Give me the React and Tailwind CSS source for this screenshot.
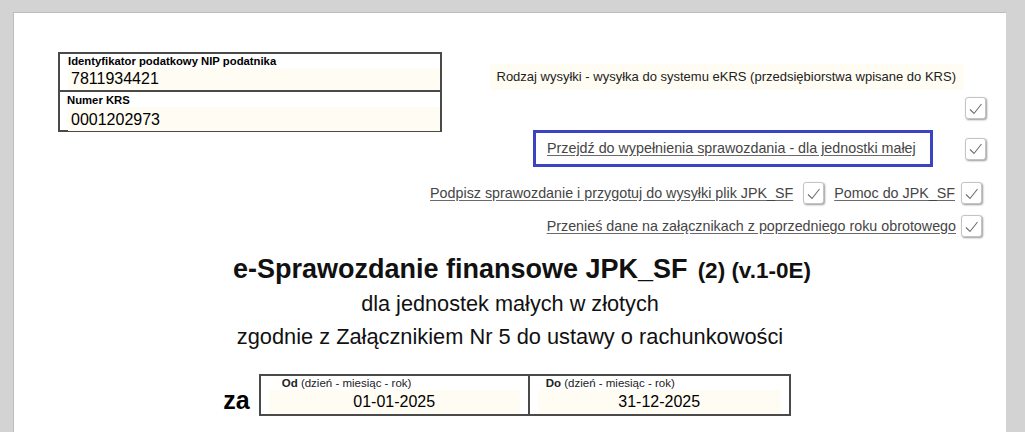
import React from "react";

function Check() {
  return (
    <div className="w-[21px] h-[22px] shrink-0 rounded-[3px] border border-[#c4c4c4] bg-white shadow-[1px_1px_2px_rgba(0,0,0,0.4)] flex items-center justify-center">
      <svg width="17" height="17" viewBox="0 0 17 17" fill="none">
        <polyline points="3,9.5 7,13.5 14.5,4" stroke="#6e6e6e" strokeWidth="1.1" fill="none" />
      </svg>
    </div>
  );
}

function LinkText({ children }) {
  return (
    <span className="text-[14.3px] leading-[17px] text-[#454545] underline decoration-[#6a6a6a] underline-offset-[2px] whitespace-nowrap">
      {children}
    </span>
  );
}

export default function App() {
  return (
    <div
      className="w-[1025px] h-[432px] overflow-hidden bg-[#d3d3d3] pt-[12px] pl-[13px]"
      style={{ fontFamily: '"Liberation Sans", Arial, sans-serif' }}
    >
      <div className="w-[993px] h-[440px] bg-white border-l border-t border-[#bdbdbd] text-black">
        {/* top section */}
        <div className="flex pt-[39px]">
          {/* NIP / KRS box */}
          <div className="ml-[44px] w-[384px] h-[80px] border-2 border-[#4a4a4a] flex flex-col shrink-0 self-start">
            <div className="h-[38px] border-b-2 border-[#4a4a4a] flex flex-col">
              <div className="pl-[8px] pt-[1px] text-[11.3px] leading-[12px] font-bold">Identyfikator podatkowy NIP podatnika</div>
              <div className="ml-[8px] mt-[1px] flex-1 bg-[#fffcf3] pl-[3px] text-[16px] leading-[22px]">7811934421</div>
            </div>
            <div className="flex-1 flex flex-col">
              <div className="pl-[7px] pt-[2px] text-[11.3px] leading-[12px] font-bold">Numer KRS</div>
              <div className="ml-[8px] mt-[1px] flex-1 bg-[#fffcf3] pl-[3px] pt-[2px] text-[16px] leading-[22px]">0001202973</div>
            </div>
          </div>

          {/* right column */}
          <div className="flex-1 min-w-0 flex flex-col items-end pr-[20px] pt-[12px]">
            <div className="shrink-0 mr-[22px] w-[474px] h-[26px] bg-[#fffcf3] flex items-center justify-end pr-[8px] text-[13px] text-[#222] whitespace-nowrap">
              Rodzaj wysyłki - wysyłka do systemu eKRS (przedsiębiorstwa wpisane do KRS)
            </div>
            <div className="mt-[7px]">
              <Check />
            </div>
            <div className="mt-[11px] flex items-center shrink-0">
              <div className="w-[400px] h-[37px] border-[3px] border-[#3b43c2] flex items-center pl-[11px]">
                <LinkText>Przejdź do wypełnienia sprawozdania - dla jednostki małej</LinkText>
              </div>
              <div className="ml-[32px]">
                <Check />
              </div>
            </div>
            <div className="mt-[14px] mr-[4px] flex items-center shrink-0">
              <LinkText>Podpisz sprawozdanie i przygotuj do wysyłki plik JPK_SF</LinkText>
              <div className="ml-[10px]">
                <Check />
              </div>
              <div className="ml-[10px]">
                <LinkText>Pomoc do JPK_SF</LinkText>
              </div>
              <div className="ml-[6px]">
                <Check />
              </div>
            </div>
            <div className="mt-[10px] mr-[4px] flex items-center shrink-0">
              <LinkText>Przenieś dane na załącznikach z poprzedniego roku obrotowego</LinkText>
              <div className="ml-[5px]">
                <Check />
              </div>
            </div>
          </div>
        </div>

        {/* title */}
        <div className="mt-[16px] flex flex-col items-center text-[#111]">
          <div className="pl-[24px] leading-[33px] whitespace-nowrap font-bold flex items-baseline">
            <span className="text-[27px]">e-Sprawozdanie finansowe JPK_SF</span>
            <span className="ml-[10px] text-[22.5px]">(2) (v.1-0E)</span>
          </div>
          <div className="text-[21.7px] leading-[33px] whitespace-nowrap">dla jednostek małych w złotych</div>
          <div className="text-[21.8px] leading-[33px] whitespace-nowrap">zgodnie z Załącznikiem Nr 5 do ustawy o rachunkowości</div>
        </div>

        {/* dates */}
        <div className="mt-[21px] pr-[6px] flex items-end justify-center">
          <span className="text-[25px] leading-[30px] font-bold mr-[9px] mb-[1px]">za</span>
          <div className="w-[532px] h-[42px] border-2 border-[#4a4a4a] flex">
            <div className="w-[269px] border-r-2 border-[#4a4a4a] flex flex-col">
              <div className="pl-[21px] pt-[1px] text-[11.5px] leading-[12px] text-[#222]">
                <span className="font-bold">Od</span> (dzień - miesiąc - rok)
              </div>
              <div className="mx-[8px] mt-[1px] mb-[1px] flex-1 bg-[#fffcf3] text-center text-[16px] leading-[24px]">01-01-2025</div>
            </div>
            <div className="flex-1 flex flex-col">
              <div className="pl-[16px] pt-[1px] text-[11.5px] leading-[12px] text-[#222]">
                <span className="font-bold">Do</span> (dzień - miesiąc - rok)
              </div>
              <div className="mx-[8px] mt-[1px] mb-[1px] flex-1 bg-[#fffcf3] text-center text-[16px] leading-[24px]">31-12-2025</div>
            </div>
          </div>
        </div>
      </div>
    </div>
  );
}
